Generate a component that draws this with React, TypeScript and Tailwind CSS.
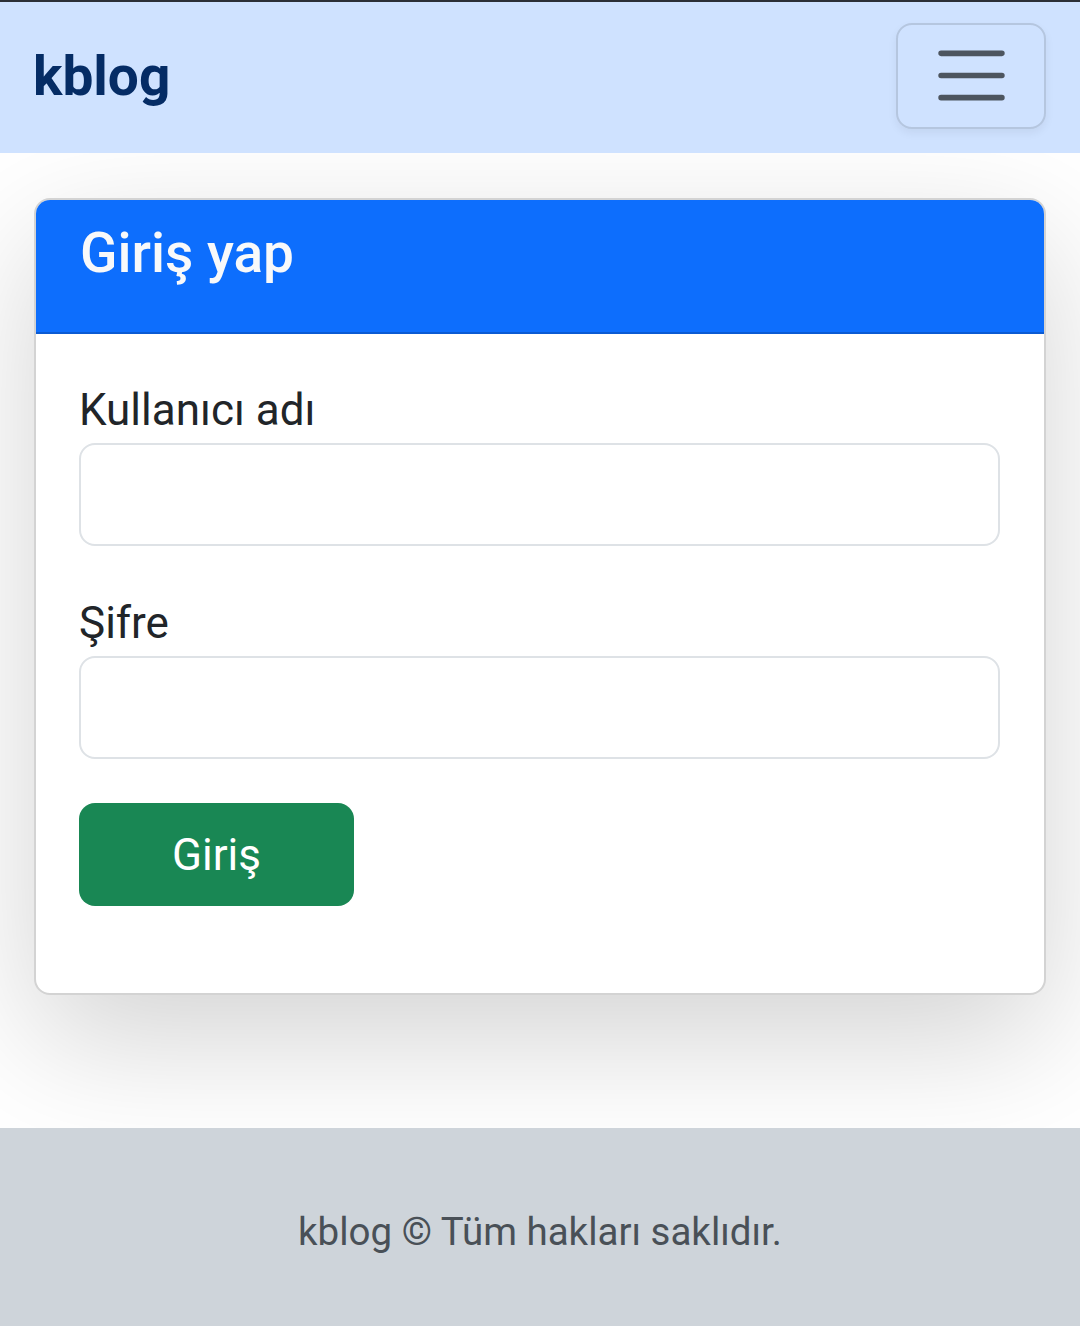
import React from "react";

export default function App() {
  return (
    <div
      className="min-h-screen flex flex-col bg-white"
      style={{ fontFamily: "Roboto, 'Noto Sans', Arial, sans-serif" }}
    >
      <div className="h-[2px] bg-[#2b2f36]" />
      <nav className="relative z-10 bg-[#cfe2ff] h-[151px] pl-[33px] pr-[34px] pb-[4px] flex items-center justify-between">
        <span className="text-[55px] font-bold leading-[82px] text-[#052c65]">kblog</span>
        <button className="w-[150px] h-[106px] border-2 border-[rgba(33,37,41,0.15)] rounded-[16px] flex items-center justify-center shadow-[0_4px_10px_rgba(0,0,0,0.06)]">
          <svg width="83" height="83" viewBox="0 0 30 30" fill="none">
            <path
              d="M4 7h22M4 15h22M4 23h22"
              stroke="rgba(33,37,41,0.75)"
              strokeWidth="2"
              strokeLinecap="round"
              strokeMiterlimit="10"
            />
          </svg>
        </button>
      </nav>
      <main className="px-[34px] pt-[45px] pb-[133px]">
        <div className="bg-white border-2 border-[#d3d3d3] rounded-[16px] overflow-hidden shadow-[0_44px_132px_rgba(0,0,0,0.175)]">
          <div className="bg-[#0d6efd] border-b-2 border-[#0b5bd3] px-[44px] pt-[20px] pb-[46px]">
            <h5 className="text-[55px] font-medium leading-[66px] text-[#f8f9fa]">Giriş yap</h5>
          </div>
          <div className="pl-[43px] pr-[44px] pt-[43px] pb-[44px]">
            <label className="block text-[44px] leading-[66px] text-[#212529]">Kullanıcı adı</label>
            <input
              type="text"
              className="block w-full h-[103px] border-2 border-[#dee2e6] rounded-[16px] bg-white outline-none"
            />
            <div className="h-[44px]" />
            <label className="block text-[44px] leading-[66px] text-[#212529]">Şifre</label>
            <input
              type="password"
              className="block w-full h-[103px] border-2 border-[#dee2e6] rounded-[16px] bg-white outline-none"
            />
            <div className="h-[44px]" />
            <button className="w-[275px] h-[103px] bg-[#198754] text-white text-[44px] leading-[66px] rounded-[16px]">
              Giriş
            </button>
            <div className="h-[43px]" />
          </div>
        </div>
      </main>
      <footer className="h-[198px] bg-[#ced4da] pt-[9px] flex items-center justify-center text-[38.5px] leading-[58px] text-[#495057]">
        kblog © Tüm hakları saklıdır.
      </footer>
    </div>
  );
}
